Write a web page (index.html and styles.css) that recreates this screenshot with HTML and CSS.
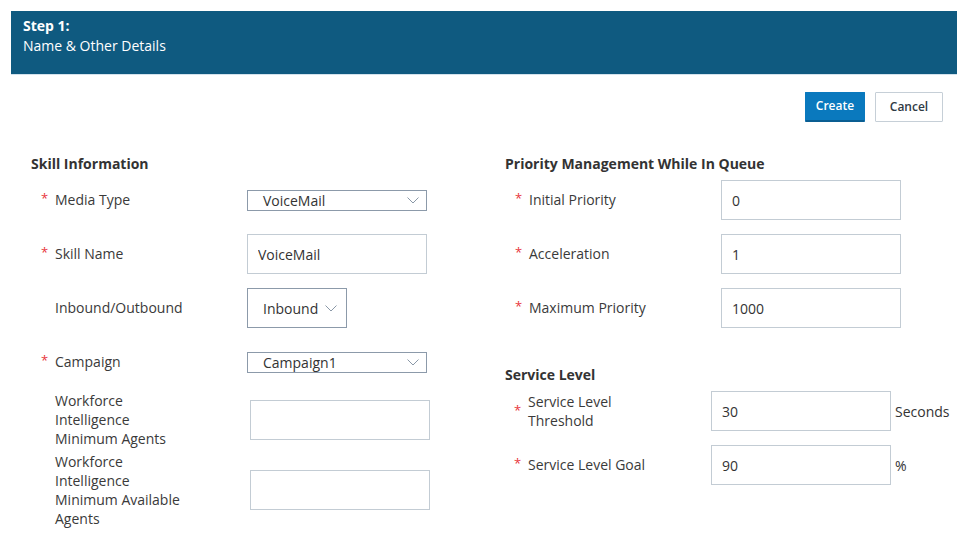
FILE: index.html
```html
<!DOCTYPE html>
<html>
<head>
<meta charset="utf-8">
<link rel="stylesheet" href="styles.css">
</head>
<body>
<div class="header">
  <div class="step">Step 1:</div>
  <div class="subtitle">Name &amp; Other Details</div>
</div>
<div class="actions">
  <button class="btn btn-primary">Create</button>
  <button class="btn btn-default">Cancel</button>
</div>
<div class="form">
  <div class="col col-left">
    <div class="section-title">Skill Information</div>
    <div class="row">
      <div class="label"><span class="req">*</span><span class="text">Media Type</span></div>
      <div class="select sel-wide"><span>VoiceMail</span><svg width="12" height="7" viewBox="0 0 12 7"><path d="M0.5 0.5 L6 6 L11.5 0.5" fill="none" stroke="#8a98a7" stroke-width="1"/></svg></div>
    </div>
    <div class="row">
      <div class="label"><span class="req">*</span><span class="text">Skill Name</span></div>
      <input class="input" value="VoiceMail">
    </div>
    <div class="row">
      <div class="label"><span class="req"></span><span class="text">Inbound/Outbound</span></div>
      <div class="select sel-box"><span>Inbound</span><svg width="12" height="7" viewBox="0 0 12 7"><path d="M0.5 0.5 L6 6 L11.5 0.5" fill="none" stroke="#8a98a7" stroke-width="1"/></svg></div>
    </div>
    <div class="row">
      <div class="label"><span class="req">*</span><span class="text">Campaign</span></div>
      <div class="select sel-wide"><span>Campaign1</span><svg width="12" height="7" viewBox="0 0 12 7"><path d="M0.5 0.5 L6 6 L11.5 0.5" fill="none" stroke="#8a98a7" stroke-width="1"/></svg></div>
    </div>
    <div class="row row-wfi1">
      <div class="label label-multi"><span class="req"></span><span class="text">Workforce Intelligence Minimum Agents</span></div>
      <input class="input input-shift" value="">
    </div>
    <div class="row row-wfi2">
      <div class="label label-multi"><span class="req"></span><span class="text">Workforce Intelligence Minimum Available Agents</span></div>
      <input class="input input-shift" value="">
    </div>
  </div>
  <div class="col col-right">
    <div class="section-title">Priority Management While In Queue</div>
    <div class="row">
      <div class="label label-r"><span class="req">*</span><span class="text">Initial Priority</span></div>
      <input class="input" value="0">
    </div>
    <div class="row">
      <div class="label label-r"><span class="req">*</span><span class="text">Acceleration</span></div>
      <input class="input" value="1">
    </div>
    <div class="row">
      <div class="label label-r"><span class="req">*</span><span class="text">Maximum Priority</span></div>
      <input class="input" value="1000">
    </div>
    <div class="section-title section-gap">Service Level</div>
    <div class="row">
      <div class="label label-s label-multi"><span class="req">*</span><span class="text">Service Level Threshold</span></div>
      <input class="input input-s" value="30">
      <span class="suffix">Seconds</span>
    </div>
    <div class="row">
      <div class="label label-s"><span class="req">*</span><span class="text">Service Level Goal</span></div>
      <input class="input input-s" value="90">
      <span class="suffix">%</span>
    </div>
  </div>
</div>
</body>
</html>
```
FILE: styles.css
```css
html, body {
  margin: 0;
  padding: 0;
  background: #ffffff;
}
body {
  padding: 11px 10px 0 11px;
  font-family: "Open Sans", "Noto Sans", sans-serif;
  font-size: 14px;
  color: #3a3a3a;
}
.header {
  background: #0f5a80;
  height: 64px;
  border-bottom: 1px solid #d3e2ec;
  box-sizing: border-box;
  padding: 5px 12px 0 12px;
  color: #ffffff;
  line-height: 20px;
}
.step {
  font-weight: 700;
}
.actions {
  display: flex;
  justify-content: flex-end;
  gap: 10px;
  margin-top: 17px;
  padding-right: 14px;
}
.btn {
  font-family: "Open Sans", "Noto Sans", sans-serif;
  font-size: 12px;
  font-weight: 600;
  height: 30px;
  box-sizing: border-box;
  border-radius: 1px;
  padding: 0 0 2px 0;
  cursor: pointer;
}
.btn-primary {
  width: 60px;
  background: #0a79be;
  color: #ffffff;
  border: 1px solid #0a79be;
  border-bottom: 2px solid #0a5e92;
}
.btn-default {
  width: 68px;
  background: #ffffff;
  color: #2f3a44;
  border: 1px solid #c6cfd7;
}
.form {
  display: grid;
  grid-template-columns: 474px 1fr;
  padding-left: 20px;
  margin-top: 32px;
}
.section-title {
  font-weight: 700;
  line-height: 20px;
  color: #333333;
  margin-bottom: 6px;
}
.section-gap {
  margin-top: 37px;
}
.row {
  display: flex;
  align-items: center;
  min-height: 40px;
  margin-bottom: 14px;
}
.row-wfi1 {
  margin-top: -5px;
  margin-bottom: 4px;
}
.row-wfi2 {
  margin-bottom: 0;
}
.label {
  display: flex;
  align-items: center;
  width: 216px;
  flex-shrink: 0;
  line-height: 19px;
  position: relative;
  top: -1px;
}
.label-multi {
  top: 0;
}
.label-r {
  width: 216px;
}
.label-s {
  width: 206px;
}
.req {
  width: 14px;
  margin-left: 10px;
  color: #e8353b;
  font-size: 13px;
  position: relative;
  top: -1px;
}
.label-s .req {
  margin-left: 9px;
}
.label .text {
  width: 132px;
}
.label-s .text {
  width: 140px;
}
.input {
  width: 180px;
  height: 40px;
  box-sizing: border-box;
  border: 1px solid #c3ccd4;
  border-radius: 0;
  padding: 0 10px;
  font-family: "Open Sans", "Noto Sans", sans-serif;
  font-size: 14px;
  color: #333333;
  background: #ffffff;
  outline: none;
}
.input-shift {
  margin-left: 3px;
}
.suffix {
  margin-left: 4px;
  color: #333333;
}
.select {
  display: flex;
  align-items: center;
  justify-content: space-between;
  box-sizing: border-box;
  border: 1px solid #8c9aaa;
  background: #ffffff;
  color: #333333;
}
.sel-wide {
  width: 180px;
  height: 21px;
  padding: 0 7px 0 15px;
}
.sel-box {
  width: 100px;
  height: 40px;
  padding: 0 9px 0 15px;
}
.select svg {
  display: block;
}
```
